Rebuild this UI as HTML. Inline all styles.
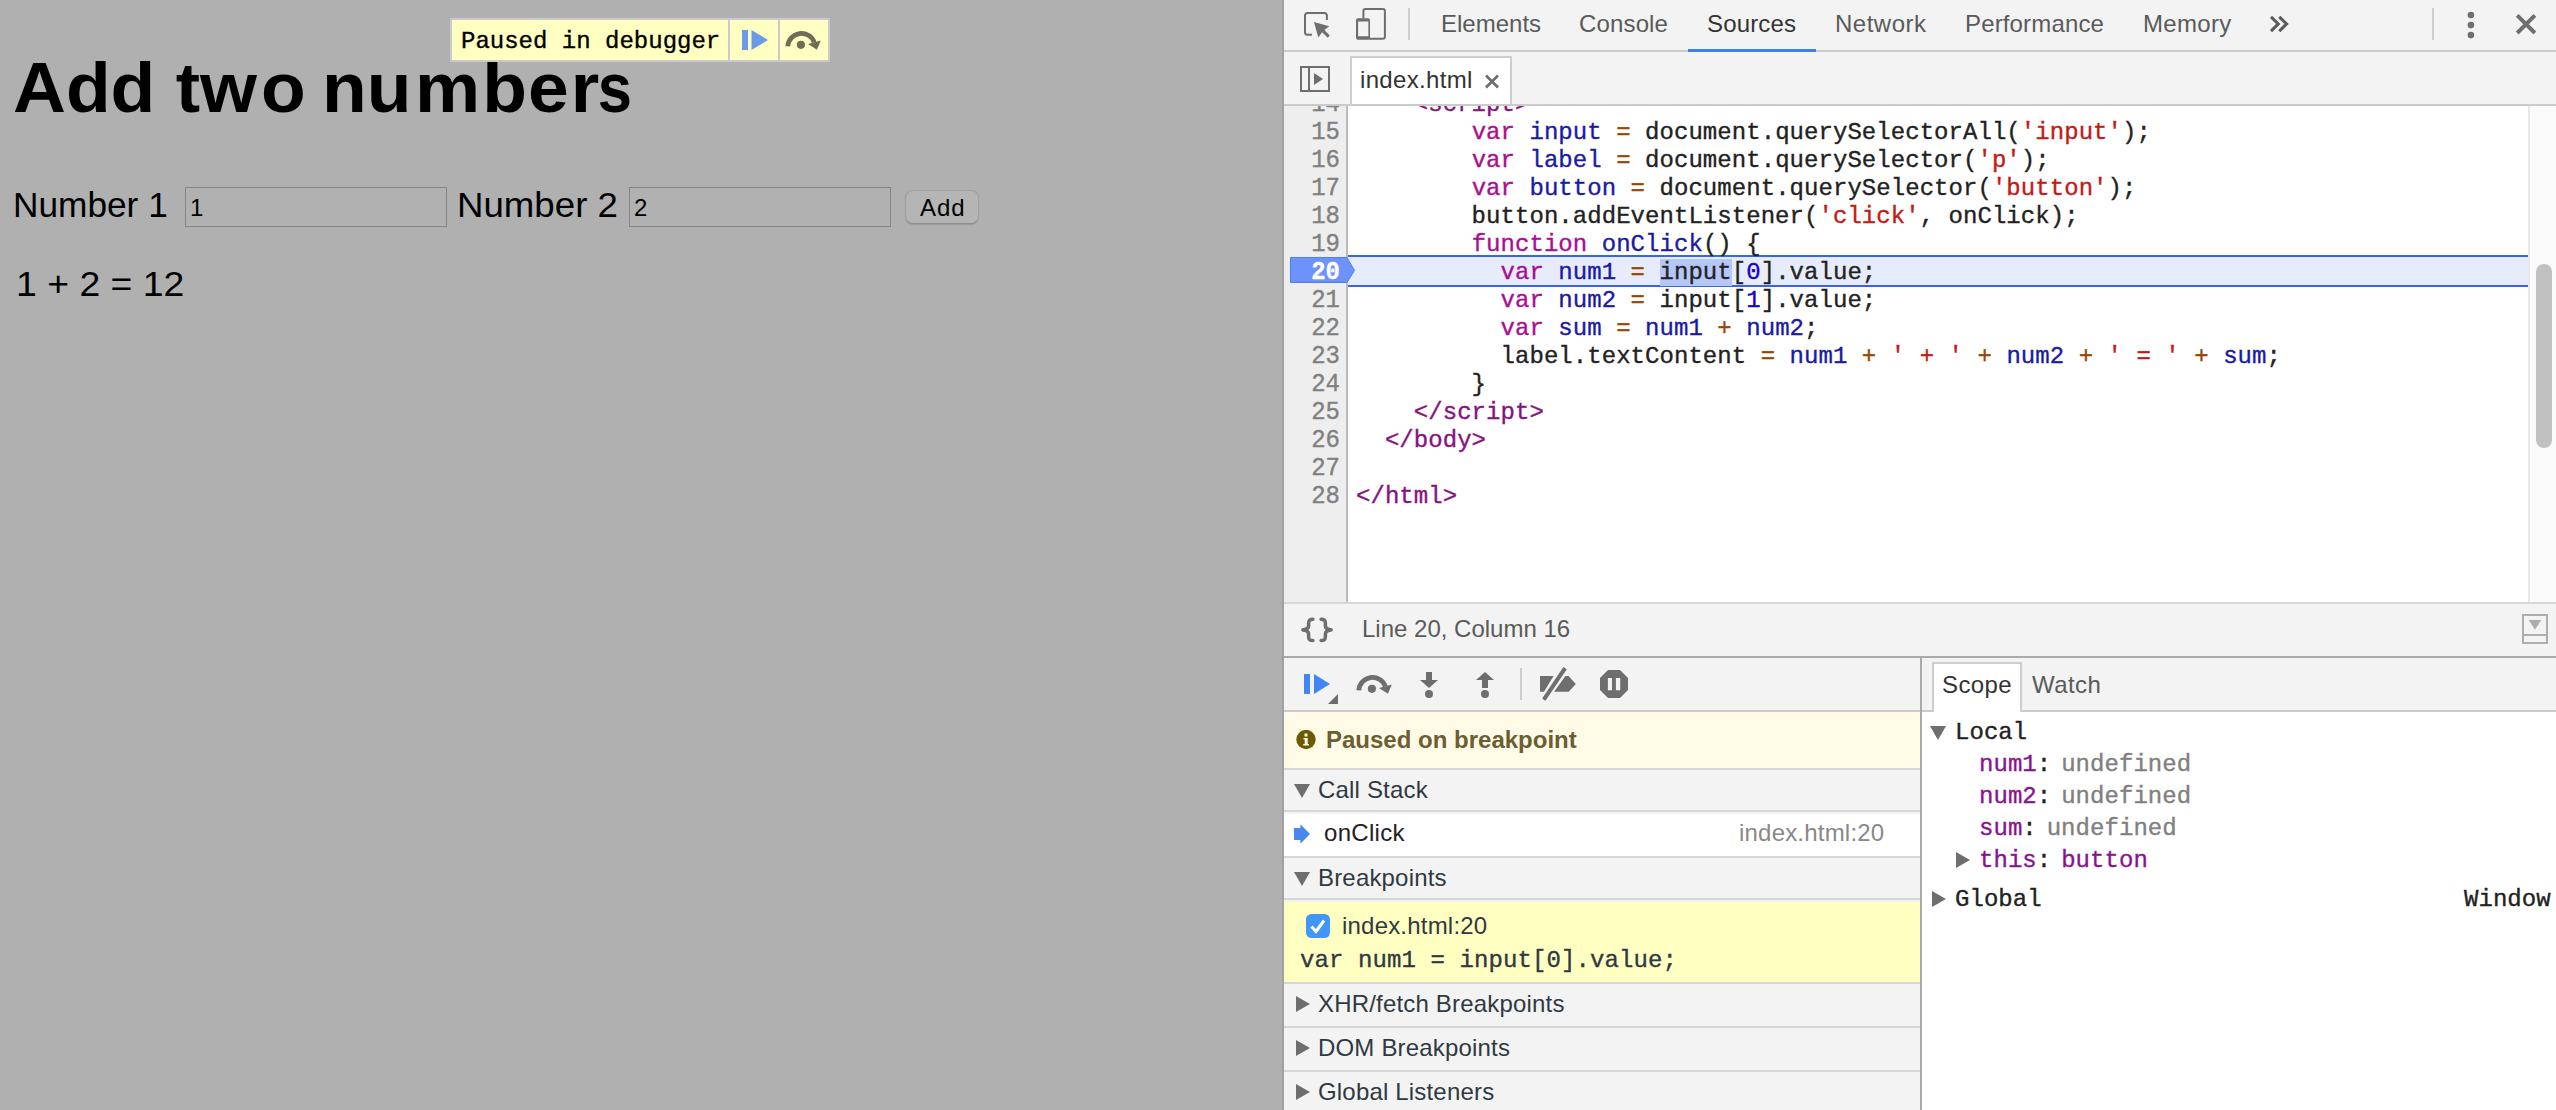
<!DOCTYPE html>
<html>
<head>
<meta charset="utf-8">
<title>DevTools</title>
<style>
html,body{margin:0;padding:0;}
body{width:2556px;height:1110px;overflow:hidden;position:relative;background:#b0b0b0;font-family:"Liberation Sans",sans-serif;color:#000;}
.abs{position:absolute;}
.t{position:absolute;white-space:pre;line-height:1;}
.sans{font-family:"Liberation Sans",sans-serif;}
.mono{font-family:"Liberation Mono",monospace;-webkit-text-stroke:0.35px;}

/* ---------- left page ---------- */
#page{position:absolute;left:0;top:0;width:1284px;height:1110px;background:#b0b0b0;}
#h1{left:13px;top:52px;font-size:71px;font-weight:bold;transform-origin:0 0;transform:scaleX(1.0313);}
.lbl{font-size:35px;transform-origin:0 0;}
.inp{position:absolute;box-sizing:border-box;border:1px solid #858585;background:#b1b1b1;}
.inp span{position:absolute;left:4px;top:8px;font-size:24px;line-height:1;}
#btn{position:absolute;box-sizing:border-box;border:1px solid #a0a0a0;border-bottom-color:#8f8f8f;border-radius:8px;background:#b5b5b5;box-shadow:0 1px 1px rgba(0,0,0,0.12);}

/* paused box */
#paused{position:absolute;left:450px;top:18px;width:380px;height:44px;box-sizing:border-box;border:2px solid #cacaca;background:#ffffc2;}
#paused .div{position:absolute;top:0;width:2px;height:40px;background:#cacaca;}

/* ---------- devtools ---------- */
#dt{position:absolute;left:1284px;top:0;width:1272px;height:1110px;background:#f3f3f3;}
#edge{position:absolute;left:1282px;top:0;width:2px;height:1110px;background:#a0a0a0;}
.hl{position:absolute;left:0;width:1272px;height:2px;background:#cbcbcb;}
.tab{font-size:24px;color:#5a5a5a;top:12px;}
#code{position:absolute;left:0;top:106px;width:1272px;height:496px;background:#fff;overflow:hidden;}
#gutter{position:absolute;left:0;top:0;width:62px;height:496px;background:#eeeeee;border-right:2px solid #bbbbbb;}
.ln{position:absolute;left:0;width:56px;text-align:right;transform:scaleY(1.1);transform-origin:0 20.4px;-webkit-text-stroke:0.35px;font-family:"Liberation Mono",monospace;font-size:24px;line-height:28px;color:#808080;white-space:pre;}
.cl{position:absolute;left:72px;-webkit-text-stroke:0.35px;font-family:"Liberation Mono",monospace;font-size:24px;line-height:28px;color:#222;white-space:pre;letter-spacing:0.05px;}
.ln.bp{color:#fff;font-weight:bold;} .sel{background:#b5c7f8;}
.k{color:#aa0d91;} .d{color:#1a1aa6;} .o{color:#994500;} .s{color:#c41a16;} .n{color:#1c00cf;} .g{color:#881280;}

.dk{position:absolute;height:2px;background:#aaaaaa;}
.hdr{position:absolute;left:0;width:636px;height:40px;background:#f3f3f3;}
.hdr .t{left:34px;top:8px;font-size:24px;color:#303942;letter-spacing:0.18px;}
.tri{position:absolute;}
.sc{position:absolute;-webkit-text-stroke:0.35px;font-family:"Liberation Mono",monospace;font-size:24px;line-height:32px;white-space:pre;color:#222;letter-spacing:0.05px;}
.pn{color:#881391;} .pv{color:#808080;} .vv{margin-left:-4.6px;}
</style>
</head>
<body>
<div id="page">
  <div id="h1" class="t sans">Add t<span style="letter-spacing:3.9px">w</span><span style="letter-spacing:-3.9px">o</span> n<span style="letter-spacing:3.4px">u</span><span style="letter-spacing:1.9px">m</span><span style="letter-spacing:1px">b</span><span style="letter-spacing:1.9px">e</span><span style="letter-spacing:-1.5px">r</span><span style="display:inline-block;transform:scaleX(0.84);transform-origin:0 0;">s</span></div>
  <div class="t sans lbl" id="l1" style="left:13px;top:187px;transform:scaleX(1.007);">Number 1</div>
  <div class="inp" style="left:185px;top:187px;width:262px;height:40px;"><span>1</span></div>
  <div class="t sans lbl" id="l2" style="left:457px;top:187px;transform:scaleX(1.047);">Number 2</div>
  <div class="inp" style="left:629px;top:187px;width:262px;height:40px;"><span>2</span></div>
  <div id="btn" style="left:905px;top:190px;width:74px;height:34px;"><div class="t sans" style="left:14px;top:5px;font-size:24px;letter-spacing:1px;">Add</div></div>
  <div class="t sans lbl" id="res" style="left:16px;top:266px;transform:scaleX(1.068);">1 + 2 = 12</div>
</div>
<div id="paused">
  <div class="t mono" style="left:9px;top:10px;font-size:24px;">Paused in debugger</div>
  <div class="div" style="left:276px"></div>
  <div class="div" style="left:326px"></div>
  <svg class="abs" style="left:279px;top:0" width="48" height="40" viewBox="0 0 48 40"><path d="M11 10h6v20h-6z M20.5 10 L37 20 L20.5 30z" fill="#6a9be9"/></svg>
  <svg class="abs" style="left:329px;top:0" width="49" height="40" viewBox="0 0 49 40"><path d="M6.8 26.3 A13.7 13.7 0 0 1 33.3 22.3" fill="none" stroke="#6e6e58" stroke-width="4.8"/><path d="M27 24.1 L39.8 20.4 L35.9 29.7z" fill="#6e6e58"/><circle cx="19.9" cy="24.8" r="4.1" fill="#6e6e58"/></svg>
</div>
<div id="edge"></div>
<div id="dt">
  <!-- top toolbar -->
  <svg class="abs" style="left:16px;top:8px" width="36" height="36" viewBox="0 0 36 36"><path d="M26.9 11.9 V7.5 a2.5 2.5 0 0 0 -2.5 -2.5 H7.5 a2.5 2.5 0 0 0 -2.5 2.5 V24.2 a2.5 2.5 0 0 0 2.5 2.5 H11.9" fill="none" stroke="#6e6e6e" stroke-width="2"/><path d="M14 14 L29.3 18.3 L24.4 21.9 L29.7 27.6 L27.8 29.7 L22.1 24.3 L18.3 29.5z" fill="#6e6e6e"/></svg>
  <svg class="abs" style="left:70px;top:6px" width="36" height="36" viewBox="0 0 36 36"><path d="M9.4 12.5 V5.1 a2 2 0 0 1 2 -2 H28.9 a2 2 0 0 1 2 2 V30.8 a2 2 0 0 1 -2 2 H15" fill="none" stroke="#6e6e6e" stroke-width="2"/><path d="M2 14.2 a2 2 0 0 1 2 -2 h10 a2 2 0 0 1 2 2 v17.6 a2 2 0 0 1 -2 2 h-10 a2 2 0 0 1 -2 -2z M4.1 15.6 v14.6 h10.3 v-14.6z" fill="#6e6e6e" fill-rule="evenodd"/></svg>
  <div class="abs" style="left:124px;top:8px;width:2px;height:32px;background:#cdcdcd"></div>
  <div class="t sans tab" style="left:157px;">Elements</div>
  <div class="t sans tab" style="left:295px;letter-spacing:0.15px;">Console</div>
  <div class="t sans tab" style="left:423px;color:#333;letter-spacing:0.15px;">Sources</div>
  <div class="t sans tab" style="left:551px;letter-spacing:0.5px;">Network</div>
  <div class="t sans tab" style="left:681px;letter-spacing:0.15px;">Performance</div>
  <div class="t sans tab" style="left:859px;letter-spacing:0.3px;">Memory</div>
  <svg class="abs" style="left:982px;top:10px" width="28" height="28" viewBox="0 0 28 28"><path d="M5 6.8 L12.3 13.9 L5 21.1 M13.3 6.8 L20.6 13.9 L13.3 21.1" fill="none" stroke="#5a5a5a" stroke-width="3"/></svg>
  <div class="abs" style="left:1148px;top:8px;width:2px;height:32px;background:#cdcdcd"></div>
  <svg class="abs" style="left:1176px;top:8px" width="22" height="34" viewBox="0 0 22 34"><circle cx="10.9" cy="7" r="3.3" fill="#6e6e6e"/><circle cx="10.9" cy="17.1" r="3.3" fill="#6e6e6e"/><circle cx="10.9" cy="27.1" r="3.3" fill="#6e6e6e"/></svg>
  <svg class="abs" style="left:1228px;top:10px" width="28" height="28" viewBox="0 0 28 28"><path d="M5.2 5.3 L22.9 23 M22.9 5.3 L5.2 23" stroke="#6e6e6e" stroke-width="3.9" fill="none"/></svg>
  <div class="hl" style="top:50px;"></div>
  <div class="abs" style="left:404px;top:49px;width:128px;height:3px;background:#3b7ff1"></div>

  <!-- file tab row -->
  <svg class="abs" style="left:14px;top:64px" width="34" height="30" viewBox="0 0 34 30"><path d="M3 3 H31 V27 H3z M11 3 V27" fill="none" stroke="#6e6e6e" stroke-width="2"/><path d="M16 9 L25 15 L16 21z" fill="#6e6e6e"/></svg>
  <div class="abs" style="left:66px;top:56px;width:162px;height:50px;box-sizing:border-box;border:2px solid #cdcdcd;border-bottom:none;background:#fff;"></div>
  <div class="t sans" style="left:76px;top:68px;font-size:24px;color:#333;letter-spacing:0.33px;">index.html</div>
  <svg class="abs" style="left:200px;top:74px" width="16" height="16" viewBox="0 0 16 16"><path d="M2 1.5 L14 13.5 M14 1.5 L2 13.5" stroke="#6e6e6e" stroke-width="2.7" fill="none"/></svg>
  <div class="hl" style="top:104px;"></div>

  <!-- code -->
  <div id="code">
    <div class="abs" style="left:64px;top:149px;width:1180px;height:28px;background:#e7ecfd;border-top:2px solid #3367e8;border-bottom:2px solid #3367e8;"></div>
    <div id="gutter"></div>
    <svg class="abs" style="left:6px;top:151px" width="66" height="28" viewBox="0 0 66 28"><path d="M0.5 0.5 H57 L64.5 13.5 L57 25.5 H0.5z" fill="#6e92fb" stroke="#4f7df5" stroke-width="1"/></svg>
    <div class="ln" style="top:-15px">14</div>
    <div class="ln" style="top:13px">15</div>
    <div class="ln" style="top:41px">16</div>
    <div class="ln" style="top:69px">17</div>
    <div class="ln" style="top:97px">18</div>
    <div class="ln" style="top:125px">19</div>
    <div class="ln bp" style="top:153px">20</div>
    <div class="ln" style="top:181px">21</div>
    <div class="ln" style="top:209px">22</div>
    <div class="ln" style="top:237px">23</div>
    <div class="ln" style="top:265px">24</div>
    <div class="ln" style="top:293px">25</div>
    <div class="ln" style="top:321px">26</div>
    <div class="ln" style="top:349px">27</div>
    <div class="ln" style="top:377px">28</div>
    <div class="cl" style="top:-15px">    <span class="g">&lt;script&gt;</span></div>
    <div class="cl" style="top:13px">        <span class="k">var</span> <span class="d">input</span> <span class="o">=</span> document.querySelectorAll(<span class="s">'input'</span>);</div>
    <div class="cl" style="top:41px">        <span class="k">var</span> <span class="d">label</span> <span class="o">=</span> document.querySelector(<span class="s">'p'</span>);</div>
    <div class="cl" style="top:69px">        <span class="k">var</span> <span class="d">button</span> <span class="o">=</span> document.querySelector(<span class="s">'button'</span>);</div>
    <div class="cl" style="top:97px">        button.addEventListener(<span class="s">'click'</span>, onClick);</div>
    <div class="cl" style="top:125px">        <span class="k">function</span> <span class="d">onClick</span>() {</div>
    <div class="cl" style="top:153px">          <span class="k">var</span> <span class="d">num1</span> <span class="o">=</span> <span class="sel">input</span>[<span class="n">0</span>].value;</div>
    <div class="cl" style="top:181px">          <span class="k">var</span> <span class="d">num2</span> <span class="o">=</span> input[<span class="n">1</span>].value;</div>
    <div class="cl" style="top:209px">          <span class="k">var</span> <span class="d">sum</span> <span class="o">=</span> <span class="d">num1</span> <span class="o">+</span> <span class="d">num2</span>;</div>
    <div class="cl" style="top:237px">          label.textContent <span class="o">=</span> <span class="d">num1</span> <span class="o">+</span> <span class="s">' + '</span> <span class="o">+</span> <span class="d">num2</span> <span class="o">+</span> <span class="s">' = '</span> <span class="o">+</span> <span class="d">sum</span>;</div>
    <div class="cl" style="top:265px">        }</div>
    <div class="cl" style="top:293px">    <span class="g">&lt;/script&gt;</span></div>
    <div class="cl" style="top:321px">  <span class="g">&lt;/body&gt;</span></div>
    <div class="cl" style="top:349px"></div>
    <div class="cl" style="top:377px"><span class="g">&lt;/html&gt;</span></div>
    <div class="abs" style="left:1244px;top:0;width:28px;height:496px;background:#fafafa;border-left:2px solid #e8e8e8;box-sizing:border-box;"></div>
    <div class="abs" style="left:1252px;top:158px;width:16px;height:184px;border-radius:8px;background:#c1c1c1;"></div>
  </div>

  <!-- status bar -->
  <div class="hl" style="top:602px;background:#d7d7d7;"></div>
  <svg class="abs" style="left:12px;top:612px" width="44" height="36" viewBox="0 0 44 36"><path d="M16.9 7.2 C13.5 7.2 12.6 8.5 12.6 11.3 V14 C12.6 16.5 10 17.5 6.8 17.9 C10 18.3 12.6 19.3 12.6 21.8 V24.5 C12.6 27.3 13.5 28.6 16.9 28.6 M25.1 7.2 C28.5 7.2 29.4 8.5 29.4 11.3 V14 C29.4 16.5 32 17.5 35.2 17.9 C32 18.3 29.4 19.3 29.4 21.8 V24.5 C29.4 27.3 28.5 28.6 25.1 28.6" fill="none" stroke="#6e6e6e" stroke-width="3.5" stroke-linecap="round" stroke-linejoin="round"/></svg>
  <div class="t sans" style="left:78px;top:617px;font-size:24px;color:#5a5a5a;">Line 20, Column 16</div>
  <svg class="abs" style="left:1238px;top:614px" width="26" height="30" viewBox="0 0 26 30"><path d="M1 1 H25 V29 H1z M1 21 H25" fill="none" stroke="#adadad" stroke-width="2"/><path d="M6.7 6 L19.3 6 L13 15.7z" fill="#adadad"/></svg>
  <div class="dk" style="left:0;top:656px;width:1272px;"></div>

  <!-- debugger toolbar (left) -->
  <svg class="abs" style="left:16px;top:664px" width="44" height="44" viewBox="0 0 44 44"><path d="M4 10 h6 v20 h-6z M14 10 L30 20 L14 30z" fill="#4285f4"/><path d="M38 30 V40 H28z" fill="#6e6e6e"/></svg>
  <svg class="abs" style="left:68px;top:664px" width="44" height="44" viewBox="0 0 44 44"><path d="M6.8 26.3 A13.7 13.7 0 0 1 33.3 22.3" fill="none" stroke="#6e6e6e" stroke-width="4.8"/><path d="M27 24.1 L39.8 20.4 L35.9 29.7z" fill="#6e6e6e"/><circle cx="19.9" cy="24.8" r="4.1" fill="#6e6e6e"/></svg>
  <svg class="abs" style="left:128px;top:664px" width="36" height="44" viewBox="0 0 36 44"><path d="M14 8 h6 v8 h6 l-9 8 l-9 -8 h6z" fill="#6e6e6e"/><circle cx="17" cy="30" r="4" fill="#6e6e6e"/></svg>
  <svg class="abs" style="left:184px;top:664px" width="36" height="44" viewBox="0 0 36 44"><path d="M14 24 h6 v-8 h6 l-9 -8 l-9 8 h6z" fill="#6e6e6e"/><circle cx="17" cy="30" r="4" fill="#6e6e6e"/></svg>
  <div class="abs" style="left:236px;top:668px;width:2px;height:32px;background:#cdcdcd"></div>
  <svg class="abs" style="left:250px;top:664px" width="48" height="44" viewBox="0 0 48 44"><path d="M6 12.1 H19.6 L10 27.8 H6z M31.4 12.1 H34.6 L41.8 20 L34.7 27.8 H20.1z" fill="#6e6e6e"/><path d="M31.1 4.2 L9.8 35.7" stroke="#6e6e6e" stroke-width="4.1" fill="none"/></svg>
  <svg class="abs" style="left:314px;top:668px" width="32" height="32" viewBox="0 0 32 32"><path d="M10 2 H22 L30 10 V22 L22 30 H10 L2 22 V10z" fill="#6e6e6e"/><path d="M9.9 9.9 h4.1 v12.3 h-4.1z M17.9 9.9 h4.3 v12.3 h-4.3z" fill="#f3f3f3"/></svg>
  <div class="hl" style="top:710px;width:636px;"></div>

  <!-- paused message -->
  <div class="abs" style="left:0;top:712px;width:636px;height:56px;background:#fffbe6;"></div>
  <svg class="abs" style="left:11px;top:729px" width="22" height="22" viewBox="0 0 22 22"><circle cx="11" cy="10.5" r="9.7" fill="#6b5a00"/><path d="M9.5 4.5 h3 v3 h-3z M8.5 9 h4.2 v6 h1.3 v1.6 h-5.8 v-1.6 h1.5 v-4.4 h-1.2z" fill="#fffbe6"/></svg>
  <div class="t sans" style="left:42px;top:728px;font-size:24px;font-weight:bold;color:#6c5e33;">Paused on breakpoint</div>
  <div class="hl" style="top:768px;width:636px;background:#d6d6d6;"></div>

  <!-- call stack -->
  <div class="hdr" style="top:770px;"><svg class="tri" style="left:10px;top:14px" width="16" height="14" viewBox="0 0 16 14"><path d="M0 0 H16 L8 14z" fill="#6e6e6e"/></svg><div class="t sans">Call Stack</div></div>
  <div class="hl" style="top:810px;width:636px;background:#d6d6d6;"></div>
  <div class="abs" style="left:0;top:814px;width:636px;height:42px;background:#fff;"></div>
  <svg class="abs" style="left:9px;top:824px" width="18" height="20" viewBox="0 0 18 20"><path d="M1 4 H7.4 V0.3 L17 10 L7.4 19.7 V16 H1z" fill="#4986ee"/></svg>
  <div class="t sans" style="left:40px;top:821px;font-size:24px;color:#222;letter-spacing:0.3px;">onClick</div>
  <div class="t sans" style="left:455px;top:821px;font-size:24px;color:#888;letter-spacing:0.2px;">index.html:20</div>
  <div class="hl" style="top:856px;width:636px;background:#d6d6d6;"></div>

  <!-- breakpoints -->
  <div class="hdr" style="top:858px;"><svg class="tri" style="left:10px;top:14px" width="16" height="14" viewBox="0 0 16 14"><path d="M0 0 H16 L8 14z" fill="#6e6e6e"/></svg><div class="t sans">Breakpoints</div></div>
  <div class="hl" style="top:898px;width:636px;background:#d6d6d6;"></div>
  <div class="abs" style="left:0;top:902px;width:636px;height:80px;background:#ffffc2;"></div>
  <svg class="abs" style="left:22px;top:914px" width="24" height="24" viewBox="0 0 24 24"><rect x="0" y="0" width="24" height="24" rx="5.5" fill="#4196fa"/><path d="M5.5 12.5 L10 17.5 L18 6.5" fill="none" stroke="#fff" stroke-width="3"/></svg>
  <div class="t sans" style="left:58px;top:914px;font-size:24px;color:#303942;letter-spacing:0.2px;">index.html:20</div>
  <div class="t mono" style="left:16px;top:949px;font-size:24px;color:#303942;letter-spacing:0.1px;">var num1 = input[0].value;</div>
  <div class="hl" style="top:982px;width:636px;background:#d6d6d6;"></div>

  <div class="hdr" style="top:984px;height:42px;"><svg class="tri" style="left:12px;top:12px" width="14" height="16" viewBox="0 0 14 16"><path d="M0 0 V16 L14 8z" fill="#6e6e6e"/></svg><div class="t sans">XHR/fetch Breakpoints</div></div>
  <div class="hl" style="top:1026px;width:636px;background:#d6d6d6;"></div>
  <div class="hdr" style="top:1028px;height:42px;"><svg class="tri" style="left:12px;top:12px" width="14" height="16" viewBox="0 0 14 16"><path d="M0 0 V16 L14 8z" fill="#6e6e6e"/></svg><div class="t sans">DOM Breakpoints</div></div>
  <div class="hl" style="top:1070px;width:636px;background:#d6d6d6;"></div>
  <div class="hdr" style="top:1072px;height:42px;"><svg class="tri" style="left:12px;top:12px" width="14" height="16" viewBox="0 0 14 16"><path d="M0 0 V16 L14 8z" fill="#6e6e6e"/></svg><div class="t sans">Global Listeners</div></div>

  <!-- right pane -->
  <div class="abs" style="left:636px;top:658px;width:2px;height:452px;background:#aaaaaa;"></div>
  <div class="abs" style="left:638px;top:712px;width:634px;height:398px;background:#fff;"></div>
  <div class="hl" style="left:638px;top:710px;width:634px;"></div>
  <div class="abs" style="left:648px;top:662px;width:90px;height:50px;box-sizing:border-box;border:2px solid #cdcdcd;border-bottom:none;background:#fff;"></div>
  <div class="t sans" style="left:658px;top:673px;font-size:24px;color:#333;letter-spacing:0.4px;">Scope</div>
  <div class="t sans" style="left:748px;top:673px;font-size:24px;color:#5a5a5a;letter-spacing:0.4px;">Watch</div>

  <svg class="tri" style="left:646px;top:726px" width="16" height="14" viewBox="0 0 16 14"><path d="M0 0 H16 L8 14z" fill="#6e6e6e"/></svg>
  <div class="sc" style="left:671px;top:717px;">Local</div>
  <div class="sc" style="left:695px;top:749px;"><span class="pn">num1</span>: <span class="pv vv">undefined</span></div>
  <div class="sc" style="left:695px;top:781px;"><span class="pn">num2</span>: <span class="pv vv">undefined</span></div>
  <div class="sc" style="left:695px;top:813px;"><span class="pn">sum</span>: <span class="pv vv">undefined</span></div>
  <svg class="tri" style="left:672px;top:852px" width="14" height="16" viewBox="0 0 14 16"><path d="M0 0 V16 L14 8z" fill="#6e6e6e"/></svg>
  <div class="sc" style="left:695px;top:845px;"><span class="pn">this</span>: <span class="pn vv">button</span></div>
  <svg class="tri" style="left:648px;top:891px" width="14" height="16" viewBox="0 0 14 16"><path d="M0 0 V16 L14 8z" fill="#6e6e6e"/></svg>
  <div class="sc" style="left:671px;top:884px;">Global</div>
  <div class="sc" style="left:1180px;top:884px;">Window</div>
</div>
</body>
</html>
